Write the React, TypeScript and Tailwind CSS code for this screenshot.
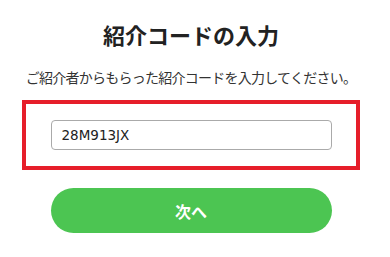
import React, { useState } from 'react';

const App: React.FC = () => {
  const [code, setCode] = useState('28M913JX');

  return (
    <div
      className="w-[390px] h-[257px] bg-white flex flex-col items-center pr-[8px]"
      style={{ fontFamily: '"Noto Sans CJK JP", "Noto Sans", sans-serif' }}
    >
      <h1 className="mt-[18px] text-[22px] leading-[32px] font-bold text-[#222222]">紹介コードの入力</h1>

      <p className="mt-[16px] text-[14px] leading-[22px] text-[#333333] tracking-[-0.75px]">
        ご紹介者からもらった紹介コードを入力してください。
      </p>

      {/* highlighted input */}
      <div className="mt-[12px] w-[338px] h-[70px] border-4 border-[#e61e2a] flex items-center justify-center">
        <input
          value={code}
          onChange={(e) => setCode(e.target.value)}
          className="w-[281px] h-[30px] border border-[#aaaaaa] rounded-[4px] px-[10px] text-[13.5px] text-[#222222] outline-none"
          style={{ fontFamily: 'Verdana, "DejaVu Sans", sans-serif' }}
        />
      </div>

      <button className="mt-[18px] w-[281px] h-[45px] rounded-full bg-[#4cc552] text-white text-[16px] font-bold">
        次へ
      </button>
    </div>
  );
};

export default App;
